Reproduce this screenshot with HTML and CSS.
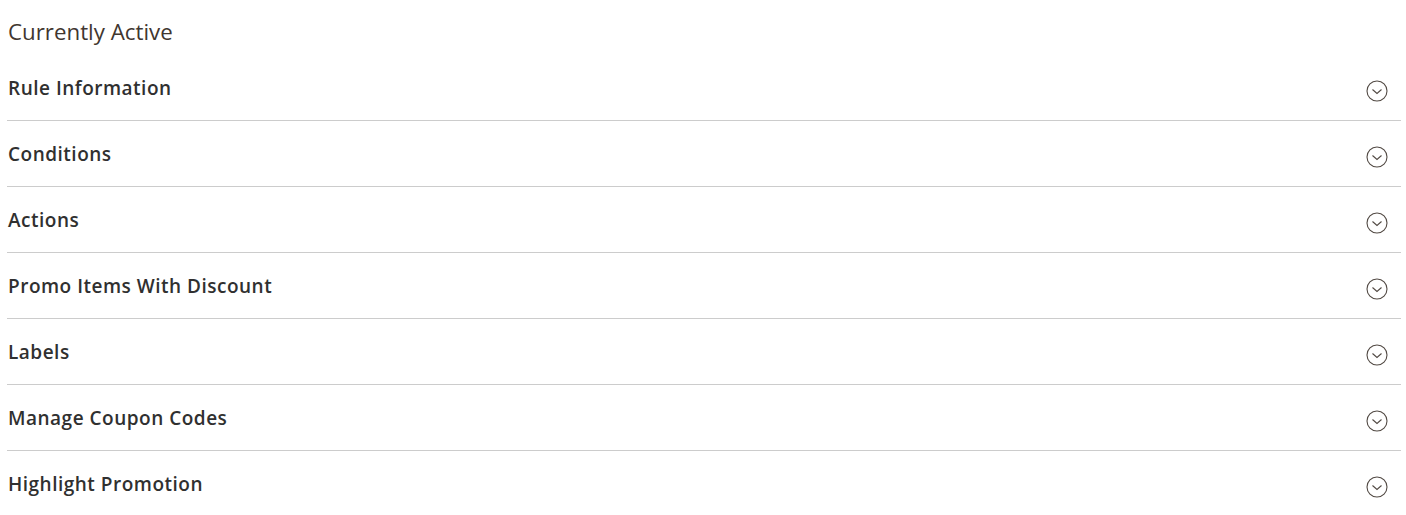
FILE: index.html
```html
<!DOCTYPE html>
<html lang="en">
<head>
    <meta charset="UTF-8">
    <title>Currently Active</title>
    <link rel="stylesheet" href="styles.css">
</head>
<body>
    <div class="rule-edit">
        <h2 class="page-title">Currently Active</h2>

        <div class="collapsible">
            <div class="collapsible-head">
                <span class="collapsible-title">Rule Information</span>
                <svg class="toggle-icon" viewBox="0 0 22 22"><circle cx="11" cy="11" r="10"/><path d="M6.5 9.5 L11 13.5 L15.5 9.5"/></svg>
            </div>
        </div>
        <div class="collapsible">
            <div class="collapsible-head">
                <span class="collapsible-title">Conditions</span>
                <svg class="toggle-icon" viewBox="0 0 22 22"><circle cx="11" cy="11" r="10"/><path d="M6.5 9.5 L11 13.5 L15.5 9.5"/></svg>
            </div>
        </div>
        <div class="collapsible">
            <div class="collapsible-head">
                <span class="collapsible-title">Actions</span>
                <svg class="toggle-icon" viewBox="0 0 22 22"><circle cx="11" cy="11" r="10"/><path d="M6.5 9.5 L11 13.5 L15.5 9.5"/></svg>
            </div>
        </div>
        <div class="collapsible">
            <div class="collapsible-head">
                <span class="collapsible-title">Promo Items With Discount</span>
                <svg class="toggle-icon" viewBox="0 0 22 22"><circle cx="11" cy="11" r="10"/><path d="M6.5 9.5 L11 13.5 L15.5 9.5"/></svg>
            </div>
        </div>
        <div class="collapsible">
            <div class="collapsible-head">
                <span class="collapsible-title">Labels</span>
                <svg class="toggle-icon" viewBox="0 0 22 22"><circle cx="11" cy="11" r="10"/><path d="M6.5 9.5 L11 13.5 L15.5 9.5"/></svg>
            </div>
        </div>
        <div class="collapsible">
            <div class="collapsible-head">
                <span class="collapsible-title">Manage Coupon Codes</span>
                <svg class="toggle-icon" viewBox="0 0 22 22"><circle cx="11" cy="11" r="10"/><path d="M6.5 9.5 L11 13.5 L15.5 9.5"/></svg>
            </div>
        </div>
        <div class="collapsible last">
            <div class="collapsible-head">
                <span class="collapsible-title">Highlight Promotion</span>
                <svg class="toggle-icon" viewBox="0 0 22 22"><circle cx="11" cy="11" r="10"/><path d="M6.5 9.5 L11 13.5 L15.5 9.5"/></svg>
            </div>
        </div>
    </div>
</body>
</html>
```

FILE: styles.css
```css
body {
    margin: 0;
    background-color: #ffffff;
    font-family: "Open Sans", Arial, sans-serif;
    color: #41362f;
}

.rule-edit {
    padding: 0 5px 0 7px;
}

.page-title {
    margin: 0;
    padding: 16px 0 0 1px;
    height: 39px;
    font-size: 22.3px;
    font-weight: 400;
    line-height: 31px;
    color: #41362f;
}

.collapsible {
    border-bottom: 1px solid #cccccc;
}

.collapsible.last {
    border-bottom: none;
}

.collapsible-head {
    display: flex;
    align-items: center;
    justify-content: space-between;
    height: 65px;
    padding: 0 13px 0 1px;
}

.collapsible-title {
    font-size: 19px;
    font-weight: 600;
    letter-spacing: 0.5px;
    color: #303030;
    margin-top: 1px;
}

/* circle + chevron toggle */
.toggle-icon {
    width: 22px;
    height: 22px;
    margin-top: 7px;
    fill: none;
    stroke: #514943;
    stroke-width: 1.1;
}
```
